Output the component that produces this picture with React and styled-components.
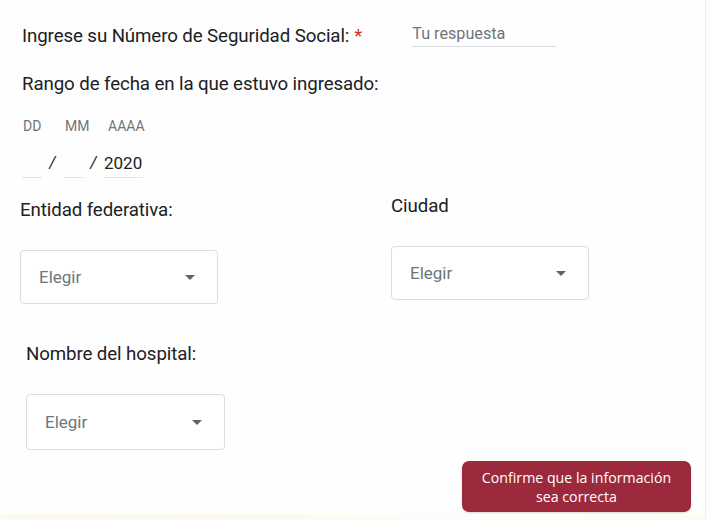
import React from 'react';
import styled, { createGlobalStyle } from 'styled-components';

const GlobalStyle = createGlobalStyle`
    html, body {
        margin: 0;
        padding: 0;
        background: #fefefe;
    }
    body {
        font-family: Roboto, "Liberation Sans", Arial, sans-serif;
        color: #202124;
    }
`;

const Page = styled.div`
    width: 706px;
    height: 520px;
    box-sizing: border-box;
    border-right: 1px solid #efefef;
    padding: 25px 0 0 22px;
    display: flex;
    flex-direction: column;
    position: relative;
    overflow: hidden;
`;

const QuestionRow = styled.div`
    display: flex;
    align-items: flex-start;
`;

const Label = styled.div`
    font-size: 18.7px;
    line-height: 22px;
    letter-spacing: -0.1px;
    color: #202124;
    margin-left: ${p => p.$indent || 0}px;
    margin-top: ${p => p.$top || 0}px;
`;

const Required = styled.span`
    color: #d93025;
    margin-left: 5px;
`;

const TextInput = styled.div`
    margin-left: 50px;
    margin-top: -1px;
    width: 144px;
    font-size: 16.2px;
    line-height: 20px;
    color: #70757a;
    padding-bottom: 2px;
    border-bottom: 1px solid #dadce0;
`;

const DateHead = styled.div`
    display: flex;
    margin-top: 23px;
    font-size: 14px;
    line-height: 16px;
    color: #70757a;
`;

const DateHeadCell = styled.span`
    width: ${p => p.$w}px;
    padding-left: 1px;
`;

const DateRow = styled.div`
    display: flex;
    align-items: flex-end;
    margin-top: 18px;
`;

const DateField = styled.div`
    width: ${p => p.$w}px;
    height: 25px;
    font-size: 17px;
    line-height: 22px;
    color: #202124;
    border-bottom: 1px solid #e4e4e4;
`;

const Slash = styled.span`
    width: 21px;
    text-align: center;
    font-size: 16px;
    line-height: 22px;
    height: 26px;
    font-style: italic;
    color: #202124;
`;

const Columns = styled.div`
    display: grid;
    grid-template-columns: 371px 1fr;
    align-items: start;
    margin-top: 21px;
    margin-left: -2px;
`;

const Field = styled.div`
    display: flex;
    flex-direction: column;
    margin-top: ${p => p.$top || 0}px;
    margin-left: ${p => p.$indent || 0}px;
`;

const Select = styled.div`
    width: ${p => p.$w || 198}px;
    height: ${p => p.$h || 54}px;
    box-sizing: border-box;
    margin-top: ${p => p.$gap || 29}px;
    border: 1px solid #dadce0;
    border-radius: 4px;
    display: flex;
    align-items: center;
    justify-content: space-between;
    padding: 0 22px 0 18px;
    font-size: 17px;
    color: #70757a;
    background: #fff;
`;

const Arrow = styled.svg`
    width: 10px;
    height: 5px;
    fill: #5f6368;
`;

const Footer = styled.div`
    display: flex;
    justify-content: flex-end;
    margin-top: 11px;
    padding-right: 14px;
`;

const ConfirmButton = styled.button`
    width: 229px;
    height: 51px;
    border: none;
    border-radius: 7px;
    background: #9c2a3c;
    color: #fff;
    font-family: "Open Sans", "Liberation Sans", sans-serif;
    font-size: 14.2px;
    line-height: 19px;
    padding: 0 18px;
    box-shadow: 0 1px 2px rgba(0, 0, 0, 0.15);
`;

const BlurStrip = styled.div`
    position: absolute;
    left: 0;
    right: 0;
    bottom: 0;
    height: 6px;
    background: linear-gradient(90deg, #fdf6e6 0%, #fbf3e0 30%, #fdfaf1 60%, #fcf7ea 100%);
    opacity: 0.5;
`;

const DropArrow = () => (
    <Arrow viewBox="0 0 10 5">
        <path d="M0 0 L10 0 L5 5 Z" />
    </Arrow>
);

const ChoiceField = ({ label, top, indent, gap, h, w }) => (
    <Field $top={top} $indent={indent}>
        <Label>{label}</Label>
        <Select $gap={gap} $h={h} $w={w}>
            <span>Elegir</span>
            <DropArrow />
        </Select>
    </Field>
);

export default function App() {
    return (
        <>
            <GlobalStyle />
            <Page>
                <QuestionRow>
                    <Label>
                        Ingrese su Número de Seguridad Social:<Required>*</Required>
                    </Label>
                    <TextInput>Tu respuesta</TextInput>
                </QuestionRow>

                <Label $top={26}>Rango de fecha en la que estuvo ingresado:</Label>

                <DateHead>
                    <DateHeadCell $w={41}>DD</DateHeadCell>
                    <DateHeadCell $w={42}>MM</DateHeadCell>
                    <DateHeadCell $w={40}>AAAA</DateHeadCell>
                </DateHead>

                <DateRow>
                    <DateField $w={20} />
                    <Slash>/</Slash>
                    <DateField $w={20} />
                    <Slash>/</Slash>
                    <DateField $w={39}>2020</DateField>
                </DateRow>

                <Columns>
                    <ChoiceField label="Entidad federativa:" top={0} />
                    <ChoiceField label="Ciudad" top={-4} />
                </Columns>

                <ChoiceField label="Nombre del hospital:" top={39} indent={4} h={56} w={199} />

                <Footer>
                    <ConfirmButton>Confirme que la información sea correcta</ConfirmButton>
                </Footer>

                <BlurStrip />
            </Page>
        </>
    );
}
